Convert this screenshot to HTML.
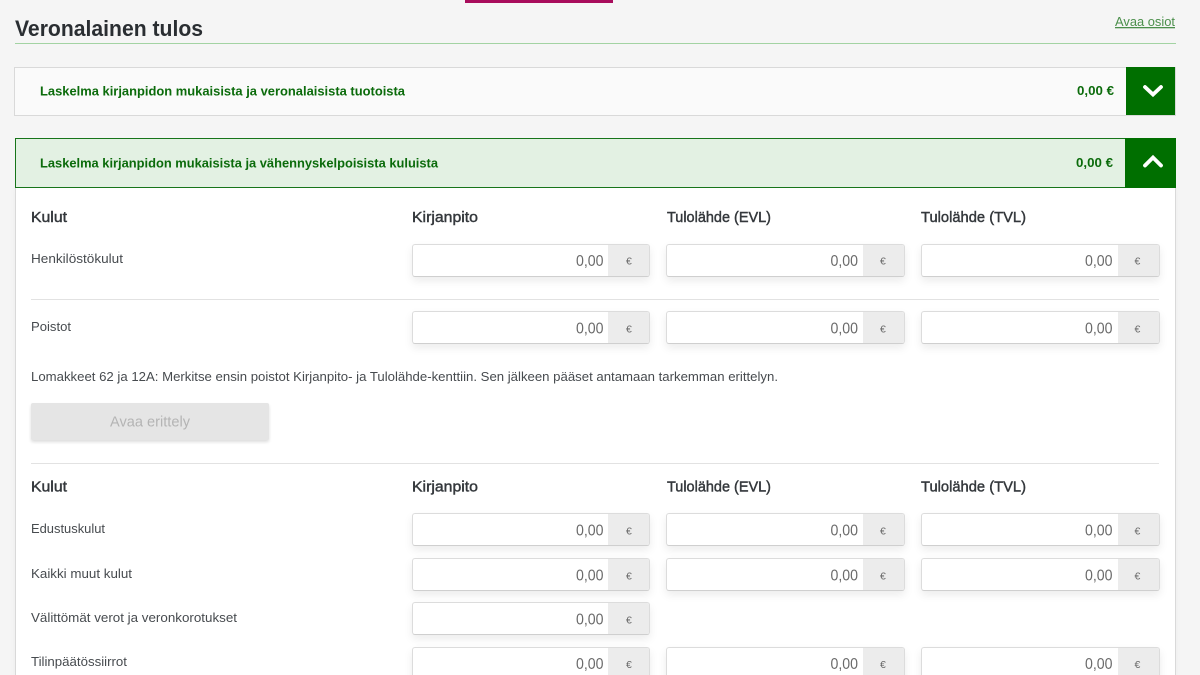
<!DOCTYPE html>
<html lang="fi">
<head>
<meta charset="utf-8">
<title>Veronalainen tulos</title>
<style>
html,body{margin:0;padding:0;width:1200px;height:675px;overflow:hidden;background:#f5f5f5}
body{position:relative;font-family:"Liberation Sans",sans-serif}
.a{position:absolute;box-sizing:border-box}
.inp{position:absolute;box-sizing:border-box;width:238px;height:33px;background:#fff;border:1px solid #dcdcdc;border-bottom-color:#cfcfcf;border-radius:3px;box-shadow:0 4px 9px rgba(0,0,0,.08);overflow:hidden}
.inp:after{content:"";position:absolute;right:0;top:0;bottom:0;width:41px;background:#ececec}
.w{width:239px}
.w:after{width:41px}
svg.t{position:absolute;left:0;top:0}
text{font-family:"Liberation Sans",sans-serif}
.h{font-size:15px;fill:#34383c;stroke:#34383c;stroke-width:.45px}
.l{font-size:13px;fill:#474b4f}
.v{font-size:15.5px;fill:#6a6a6a}
.e{font-size:10.5px;fill:#6a6a6a}
.g{font-size:13px;font-weight:bold;fill:#0b6b0b}
</style>
</head>
<body>
<div class="a" style="left:465px;top:0;width:148px;height:3px;background:#a80d5c"></div>
<div class="a" style="left:15px;top:43px;width:1161px;height:1px;background:#a3d3a3"></div>

<div class="a" style="left:14px;top:67px;width:1162px;height:49px;background:#fafafa;border:1px solid #d9d9d9"></div>
<div class="a" style="left:1126px;top:67px;width:49px;height:48px;background:#006f00"></div>
<svg class="a" style="left:1126px;top:67px" width="49" height="48"><path d="M19 20 L27 27.5 L35 20" fill="none" stroke="#fff" stroke-width="3.8" stroke-linecap="round" stroke-linejoin="miter"/></svg>

<div class="a" style="left:15px;top:187px;width:1161px;height:488px;background:#fff;border-left:1px solid #d9d9d9;border-right:1px solid #d9d9d9;box-shadow:0 2px 6px rgba(0,0,0,.04)"></div>
<div class="a" style="left:15px;top:138px;width:1161px;height:50px;background:#e3f1e3;border:1px solid #17751a"></div>
<div class="a" style="left:1125px;top:138px;width:51px;height:50px;background:#006f00"></div>
<svg class="a" style="left:1125px;top:138px" width="51" height="50"><path d="M20 27.5 L28 19.5 L36 27.5" fill="none" stroke="#fff" stroke-width="3.8" stroke-linecap="round" stroke-linejoin="miter"/></svg>

<div class="a" style="left:31px;top:299px;width:1128px;height:1px;background:#e2e2e2"></div>
<div class="a" style="left:31px;top:463px;width:1128px;height:1px;background:#e2e2e2"></div>
<div class="a" style="left:31px;top:403px;width:238px;height:37px;background:#e5e5e5;border-radius:2px;box-shadow:0 2px 3px rgba(0,0,0,.14)"></div>

<div class="inp" style="left:412px;top:244px"></div><div class="inp w" style="left:666px;top:244px"></div><div class="inp w" style="left:921px;top:244px"></div>
<div class="inp" style="left:412px;top:311px"></div><div class="inp w" style="left:666px;top:311px"></div><div class="inp w" style="left:921px;top:311px"></div>
<div class="inp" style="left:412px;top:513px"></div><div class="inp w" style="left:666px;top:513px"></div><div class="inp w" style="left:921px;top:513px"></div>
<div class="inp" style="left:412px;top:558px"></div><div class="inp w" style="left:666px;top:558px"></div><div class="inp w" style="left:921px;top:558px"></div>
<div class="inp" style="left:412px;top:602px"></div>
<div class="inp" style="left:412px;top:647px"></div><div class="inp w" style="left:666px;top:647px"></div><div class="inp w" style="left:921px;top:647px"></div>

<svg class="t" width="1200" height="675" xmlns="http://www.w3.org/2000/svg">
<text x="15" y="36" font-size="22" font-weight="bold" fill="#2a2e32" textLength="188" lengthAdjust="spacingAndGlyphs">Veronalainen tulos</text>
<text x="1115" y="26" font-size="13" fill="#4b8f4b" text-decoration="underline" textLength="60" lengthAdjust="spacingAndGlyphs">Avaa osiot</text>
<text class="g" x="40" y="95.5" textLength="365" lengthAdjust="spacingAndGlyphs">Laskelma kirjanpidon mukaisista ja veronalaisista tuotoista</text>
<text class="g" x="40" y="167.5" textLength="398" lengthAdjust="spacingAndGlyphs">Laskelma kirjanpidon mukaisista ja vähennyskelpoisista kuluista</text>
<text class="g" x="1077" y="95" textLength="37" lengthAdjust="spacingAndGlyphs">0,00 €</text>
<text class="g" x="1076" y="167" textLength="37" lengthAdjust="spacingAndGlyphs">0,00 €</text>

<text class="h" x="31" y="222" textLength="36" lengthAdjust="spacingAndGlyphs">Kulut</text>
<text class="h" x="412" y="222" textLength="66" lengthAdjust="spacingAndGlyphs">Kirjanpito</text>
<text class="h" x="667" y="222" textLength="104" lengthAdjust="spacingAndGlyphs">Tulolähde (EVL)</text>
<text class="h" x="921" y="222" textLength="105" lengthAdjust="spacingAndGlyphs">Tulolähde (TVL)</text>
<text class="h" x="31" y="491.500" textLength="36" lengthAdjust="spacingAndGlyphs">Kulut</text>
<text class="h" x="412" y="491.500" textLength="66" lengthAdjust="spacingAndGlyphs">Kirjanpito</text>
<text class="h" x="667" y="491.500" textLength="104" lengthAdjust="spacingAndGlyphs">Tulolähde (EVL)</text>
<text class="h" x="921" y="491.500" textLength="105" lengthAdjust="spacingAndGlyphs">Tulolähde (TVL)</text>

<text class="l" x="31" y="263" textLength="92" lengthAdjust="spacingAndGlyphs">Henkilöstökulut</text>
<text class="l" x="31" y="331" textLength="40" lengthAdjust="spacingAndGlyphs">Poistot</text>
<text class="l" x="31" y="381" textLength="747" lengthAdjust="spacingAndGlyphs">Lomakkeet 62 ja 12A: Merkitse ensin poistot Kirjanpito- ja Tulolähde-kenttiin. Sen jälkeen pääset antamaan tarkemman erittelyn.</text>
<text class="l" x="31" y="533" textLength="74" lengthAdjust="spacingAndGlyphs">Edustuskulut</text>
<text class="l" x="31" y="578" textLength="101" lengthAdjust="spacingAndGlyphs">Kaikki muut kulut</text>
<text class="l" x="31" y="622" textLength="206" lengthAdjust="spacingAndGlyphs">Välittömät verot ja veronkorotukset</text>
<text class="l" x="31" y="666" textLength="96" lengthAdjust="spacingAndGlyphs">Tilinpäätössiirrot</text>

<text x="110" y="426.500" font-size="15" fill="#b4b4b4" textLength="80" lengthAdjust="spacingAndGlyphs">Avaa erittely</text>

<g>
<text class="v" x="576" y="266" textLength="27.500" lengthAdjust="spacingAndGlyphs">0,00</text><text class="v" x="830.500" y="266" textLength="27.500" lengthAdjust="spacingAndGlyphs">0,00</text><text class="v" x="1085" y="266" textLength="27.500" lengthAdjust="spacingAndGlyphs">0,00</text>
<text class="v" x="576" y="333.500" textLength="27.500" lengthAdjust="spacingAndGlyphs">0,00</text><text class="v" x="830.500" y="333.500" textLength="27.500" lengthAdjust="spacingAndGlyphs">0,00</text><text class="v" x="1085" y="333.500" textLength="27.500" lengthAdjust="spacingAndGlyphs">0,00</text>
<text class="v" x="576" y="535.500" textLength="27.500" lengthAdjust="spacingAndGlyphs">0,00</text><text class="v" x="830.500" y="535.500" textLength="27.500" lengthAdjust="spacingAndGlyphs">0,00</text><text class="v" x="1085" y="535.500" textLength="27.500" lengthAdjust="spacingAndGlyphs">0,00</text>
<text class="v" x="576" y="580.500" textLength="27.500" lengthAdjust="spacingAndGlyphs">0,00</text><text class="v" x="830.500" y="580.500" textLength="27.500" lengthAdjust="spacingAndGlyphs">0,00</text><text class="v" x="1085" y="580.500" textLength="27.500" lengthAdjust="spacingAndGlyphs">0,00</text>
<text class="v" x="576" y="624.500" textLength="27.500" lengthAdjust="spacingAndGlyphs">0,00</text>
<text class="v" x="576" y="669" textLength="27.500" lengthAdjust="spacingAndGlyphs">0,00</text><text class="v" x="830.500" y="669" textLength="27.500" lengthAdjust="spacingAndGlyphs">0,00</text><text class="v" x="1085" y="669" textLength="27.500" lengthAdjust="spacingAndGlyphs">0,00</text>
</g>
<g>
<text class="e" x="626" y="264.500">€</text><text class="e" x="880" y="264.500">€</text><text class="e" x="1134.500" y="264.500">€</text>
<text class="e" x="626" y="332.500">€</text><text class="e" x="880" y="332.500">€</text><text class="e" x="1134.500" y="332.500">€</text>
<text class="e" x="626" y="534.500">€</text><text class="e" x="880" y="534.500">€</text><text class="e" x="1134.500" y="534.500">€</text>
<text class="e" x="626" y="579.500">€</text><text class="e" x="880" y="579.500">€</text><text class="e" x="1134.500" y="579.500">€</text>
<text class="e" x="626" y="623.500">€</text>
<text class="e" x="626" y="668">€</text><text class="e" x="880" y="668">€</text><text class="e" x="1134.500" y="668">€</text>
</g>
</svg>
</body>
</html>
